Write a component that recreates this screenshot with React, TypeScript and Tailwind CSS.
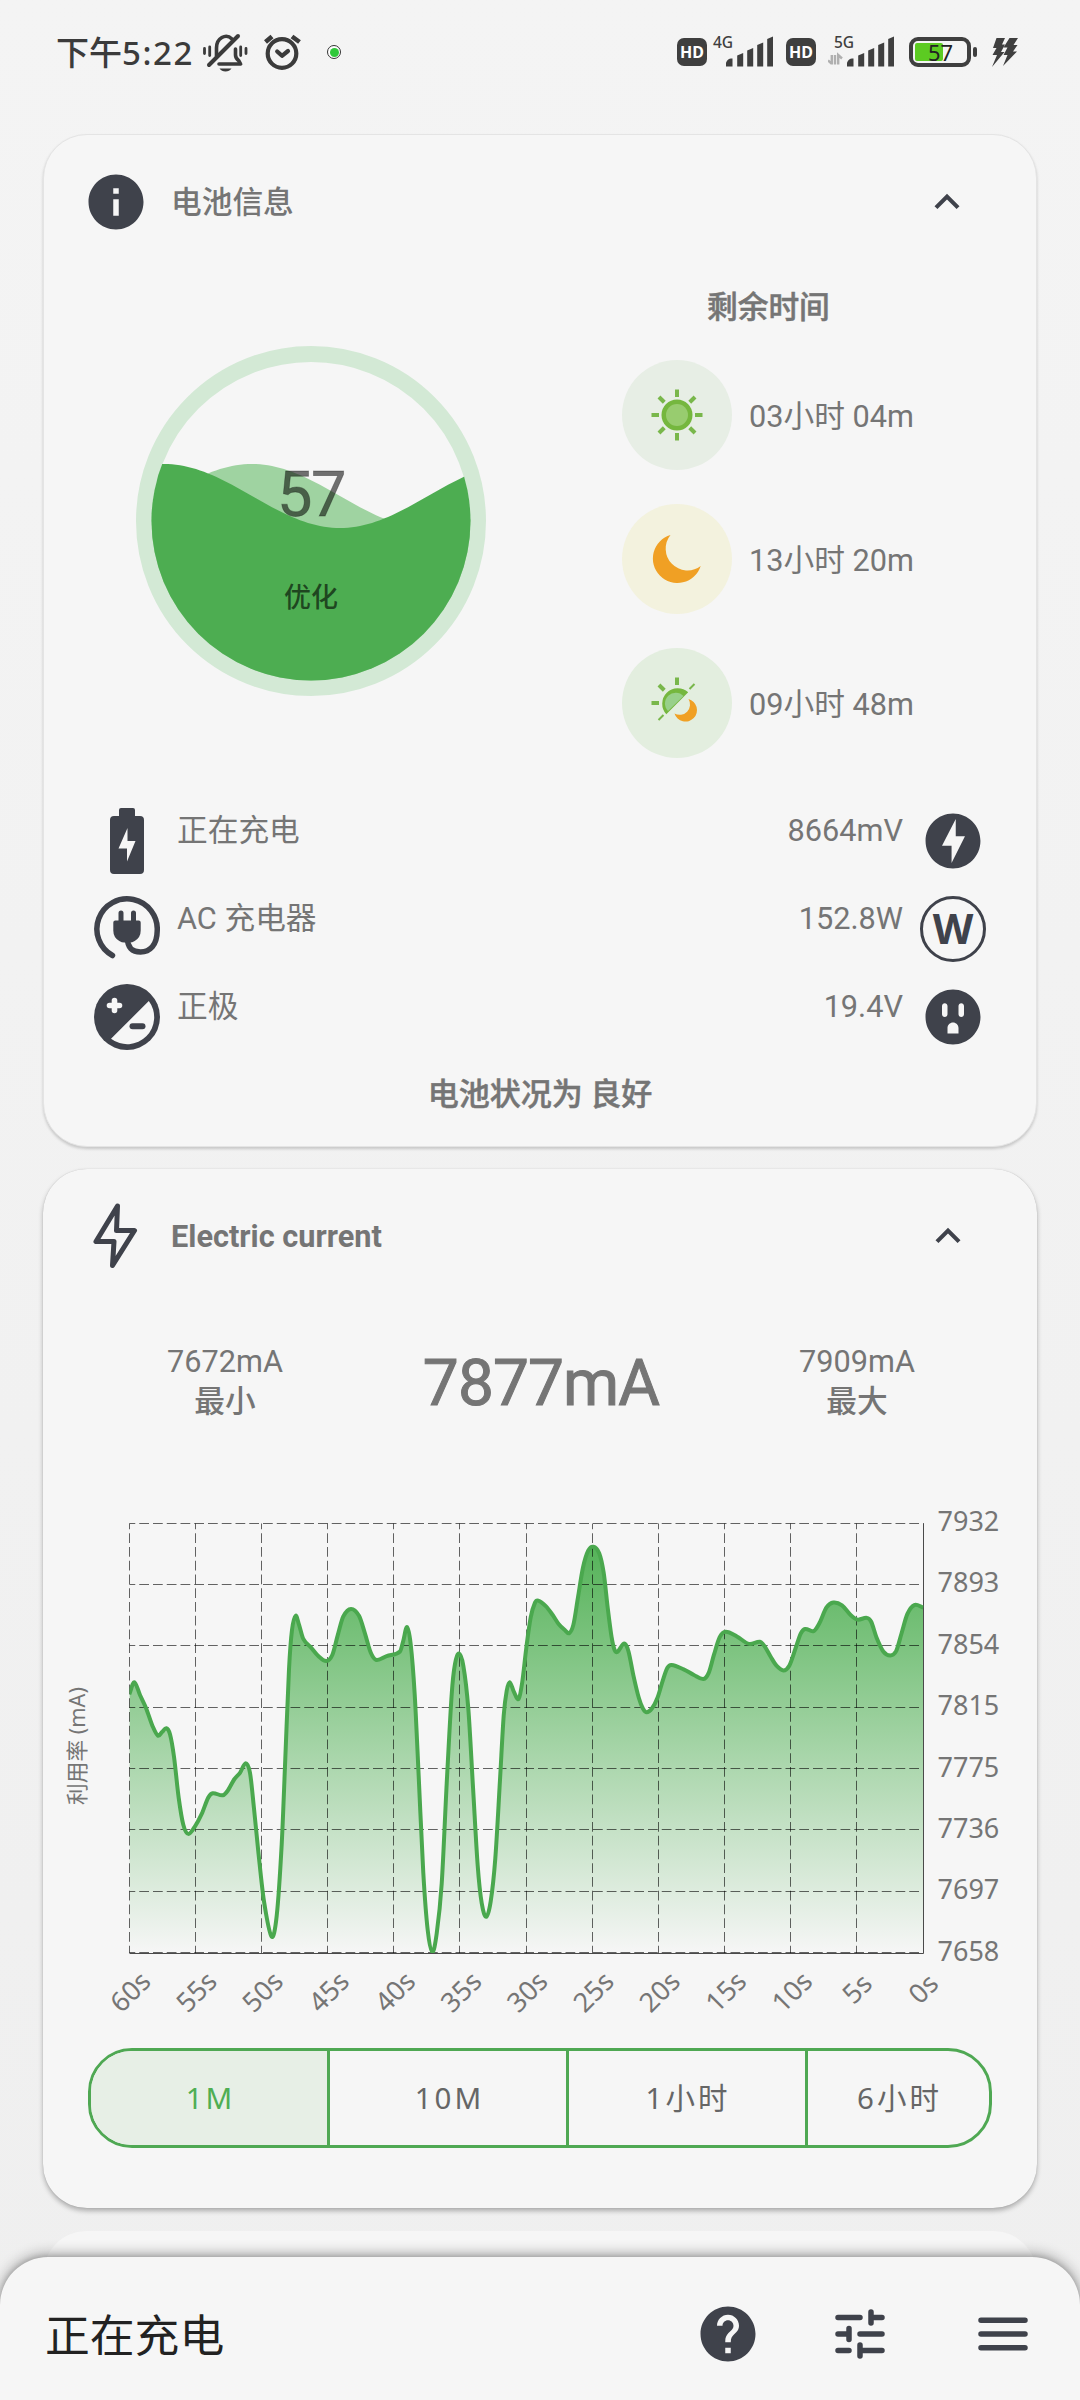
import React from "react";
import {
  MdHelp,
  MdInfo,
  MdKeyboardArrowUp,
  MdOfflineBolt,
  MdOutlet,
} from "react-icons/md";

const INK = "#3f424b";

/* ---------- status bar ---------- */

function BellOff() {
  return (
    <svg className="ml-[8px] block" width="46" height="40" viewBox="202 32 46 40" fill="none" stroke="#3b3b3b" strokeWidth="3.6" strokeLinecap="round">
      <path d="M216.5 56V48a9.5 11.5 0 0 1 15.5-9" />
      <path d="M209 65 L238 36" strokeWidth="4" />
      <path d="M235.5 49v6q0 3.500 3.500 6l1.600 3H219" strokeLinejoin="round" />
      <path d="M219.500 68.500h12q-2 3-6 3t-6-3z" fill="#3b3b3b" stroke="none" />
      <path d="M204.500 48.500v5M209.700 47v8.500M240.700 47v8.500M246 48.500v5" strokeWidth="2.800" />
    </svg>
  );
}

function Alarm() {
  return (
    <svg className="ml-[13px] block" width="42" height="40" viewBox="260 32 42 40" fill="none" stroke="#3b3b3b" strokeWidth="4.200" strokeLinecap="round" strokeLinejoin="round">
      <circle cx="281" cy="53.500" r="14.300" />
      <path d="M276.200 51.500L281 55.800L287 51" />
      <path d="M264.500 42L271 36.500M291 36.500L298.500 42" strokeLinecap="butt" strokeWidth="4.600" />
    </svg>
  );
}

function Hd({ className }: { className: string }) {
  return (
    <div className={className + " flex h-[28px] w-[30px] items-center justify-center rounded-[7px] bg-[#3f3f3f] font-['Noto_Sans'] text-[16px] font-bold leading-none text-white"}>
      HD
    </div>
  );
}

function Signal({ label, arrows }: { label: string; arrows?: boolean }) {
  return (
    <div className="relative">
      <span className="absolute left-[6px] top-[-2px] font-['Noto_Sans'] text-[15.5px] font-medium leading-[22px] text-[#3f3f3f]">{label}</span>
      <svg className="block" width="68" height="34" viewBox="0 0 68 34">
        {arrows && (
          <path d="M0 27.500L3.500 30.500M3.800 31.500V22M7 31.500V22M10.200 31.500V22L14 25.500" fill="none" stroke="#b0b0b0" strokeWidth="2.400" />
        )}
        <g fill="#3f3f3f">
          <path d="M19 33.500v-4q2-4 5-4h1.500v8z" />
          <path d="M30.200 33.500V22.500l6-2.500v13.500z" />
          <path d="M40.200 33.500V17.500l6-2.500v18.500z" />
          <path d="M50.200 33.500V12l6-2.500v24z" />
          <path d="M60.200 33.500V6l5.800-2.500v30z" />
        </g>
      </svg>
    </div>
  );
}

function StatusBar() {
  return (
    <header className="flex h-[134px] items-start pl-[56px] pt-[32px]">
      <div className="mt-[-1px] w-[138px] whitespace-nowrap font-['Noto_Sans','Noto_Sans_CJK_SC',sans-serif] text-[33px] font-medium leading-[44px] text-[#3b3b3b]">
        下午<span className="tracking-[1.6px]">5:22</span>
      </div>
      <BellOff />
      <Alarm />
      <div className="ml-[24px] mt-[13px] flex h-[14px] w-[14px] items-center justify-center rounded-full border border-[#333] bg-white">
        <div className="h-[9px] w-[9px] rounded-full bg-[#2fc83a]" />
      </div>
      <Hd className="ml-[336px] mt-[6px]" />
      <div className="mt-[1px]">
        <Signal label="4G" />
      </div>
      <Hd className="ml-[11px] mt-[6px]" />
      <div className="ml-[12px] mt-[1px]">
        <Signal label="5G" arrows />
      </div>
      <div className="ml-[13px] mt-[5px] flex items-center gap-[2px]">
        <div className="relative h-[30px] w-[62px] rounded-[9px] border-[4.500px] border-[#3f3f3f] p-[2px]">
          <div className="h-full w-[28px] rounded-[2px] bg-[#5ccb22]" />
          <span className="absolute inset-0 flex items-center justify-center pl-[1px] font-['Noto_Sans'] text-[22px] leading-none text-[#222]">57</span>
        </div>
        <div className="h-[10px] w-[4px] rounded-[2px] bg-[#3f3f3f]" />
      </div>
      <svg className="ml-[14px] mt-[6px] block" width="28" height="30" viewBox="0 0 28 30" fill="#3f3f3f">
        <path d="M5.500 0h8.500l-3 6.500h3l-4 7.500h3.500L1 29l5-12H1.500l4-7H2z" />
        <path d="M18.500 0h8.500l-4.500 7h4l-4.500 6.500h4L12 28l4.500-11h-4l4-7.500h-4z" />
      </svg>
    </header>
  );
}

/* ---------- battery gauge ---------- */

function wavePath(crest: number) {
  let d = "M0 400";
  for (let x = 0; x <= 350; x += 4) {
    const y = 150 - 32 * Math.cos((2 * Math.PI * (x - crest)) / 352);
    d += ` L${x} ${y.toFixed(1)}`;
  }
  return d + " L352 400 Z";
}

function Gauge() {
  return (
    <div className="relative h-[350px] w-[350px]">
      <svg className="block" width="350" height="350" viewBox="0 0 350 350">
        <defs>
          <clipPath id="bowl">
            <circle cx="175" cy="175" r="159.500" />
          </clipPath>
        </defs>
        <circle cx="175" cy="175" r="167" fill="none" stroke="#d3e9d5" strokeWidth="16" />
        <g clipPath="url(#bowl)">
          <path d={wavePath(116)} fill="#9fd3a1" />
          <path d={wavePath(28)} fill="#4dad51" />
        </g>
      </svg>
      <div className="absolute inset-x-0 top-[112px] text-center font-['Roboto'] text-[63px] leading-[74px] tracking-[-1.5px] text-black/55 [-webkit-text-stroke:0.8px_rgba(0,0,0,0.3)]">57</div>
      <div className="absolute inset-x-0 top-[234px] text-center text-[27px] font-medium leading-[36px] text-black/60">优化</div>
    </div>
  );
}

/* ---------- remaining time ---------- */

function Rays({ angles }: { angles: number[] }) {
  return (
    <g stroke="#79b74b" strokeWidth="4">
      {angles.map((a) => (
        <path key={a} d="M0 -18V-25.500" transform={`rotate(${a})`} />
      ))}
    </g>
  );
}

function Sun() {
  return (
    <svg width="110" height="110" viewBox="-55 -55 110 110">
      <Rays angles={[0, 45, 90, 135, 180, 225, 270, 315]} />
      <circle r="15.500" fill="#75b73e" />
      <circle r="11" fill="#98cc6f" />
    </svg>
  );
}

function Moon() {
  return (
    <svg width="110" height="110" viewBox="-55 -55 110 110">
      <path d="M-6.500 -24A24.500 24.500 0 1 0 23.700 7A21.800 21.800 0 0 1 -6.500 -24Z" fill="#f0a024" />
    </svg>
  );
}

function SunMoon() {
  return (
    <svg width="110" height="110" viewBox="-55 -55 110 110">
      <Rays angles={[0, 270, 315]} />
      <path d="M12.500 -14L17.500 -19M-13.500 12L-18.500 17" stroke="#79b74b" strokeWidth="2" />
      <path d="M11.200 -10.700A15.500 15.500 0 0 0 -10.700 11.200Z" fill="#75b73e" />
      <path d="M6.500 -7A10 10 0 0 0 -9 8Z" fill="#98d08a" />
      <path d="M11.500 -4A11.500 11.500 0 1 1 -2.500 10.500A10.400 10.400 0 0 0 11.500 -4Z" fill="#f0a024" />
    </svg>
  );
}

function TimeRow({ bg, icon, text }: { bg: string; icon: React.ReactNode; text: string }) {
  return (
    <div className="flex items-center gap-[17px]">
      <div className={"h-[110px] w-[110px] rounded-full " + bg}>{icon}</div>
      <span className="pt-[4px] text-[30.700px] leading-[44px]">{text}</span>
    </div>
  );
}

/* ---------- detail icons ---------- */

function BatteryIcon() {
  return (
    <svg className="block" width="66" height="66" viewBox="0 0 66 66">
      <path fill={INK} d="M25 2q0-2 2-2h12q2 0 2 2v6h5q4 0 4 4v50q0 4-4 4H20q-4 0-4-4V12q0-4 4-4h5z" />
      <path fill="#f6f6f6" d="M33.500 20L24.500 40.500h8.500v13L41.500 33h-8z" />
    </svg>
  );
}

function PlugIcon() {
  return (
    <svg className="block" width="66" height="66" viewBox="0 0 66 66">
      <g fill="none" stroke={INK} strokeWidth="5.500" strokeLinecap="round">
        <path d="M18.500 59.500A30.200 30.200 0 1 1 63.200 35C63 49 56 56 46.500 56C38 56 33.500 51 33.500 43" />
        <path d="M27 17v10M39.500 17v10" strokeWidth="5" />
      </g>
      <path fill={INK} d="M19.300 26.500q0-2 2-2h23.400q2 0 2 2v8q0 7-6 10.500q-2.500 1.500-5 1.500h-5.400q-2.500 0-5-1.500q-6-3.500-6-10.500z" />
    </svg>
  );
}

function PolarityIcon() {
  return (
    <svg className="block" width="66" height="66" viewBox="0 0 66 66">
      <circle cx="33" cy="33" r="33" fill={INK} />
      <path d="M54.800 17L17 54.800A27 27 0 0 0 54.800 17Z" fill="#f6f6f6" />
      <path d="M20.500 16.500v10M15.500 21.500h10" stroke="#f6f6f6" strokeWidth="5.600" strokeLinecap="round" />
      <path d="M38.500 42.300h10" stroke={INK} strokeWidth="6" strokeLinecap="round" />
    </svg>
  );
}

function WattIcon() {
  return (
    <div className="flex h-[66px] w-[66px] items-center justify-center rounded-full border-[3.500px] border-[#3f424b] pb-[2px] font-['Noto_Sans'] text-[42px] font-bold leading-none text-[#3f424b]">
      W
    </div>
  );
}

function DetailRow({ left, label, value, right }: { left: React.ReactNode; label: string; value: string; right: React.ReactNode }) {
  return (
    <div className="flex h-[88px] items-start text-[30.700px] leading-[44px]">
      <div className="w-[66px] pt-[10px]">{left}</div>
      <span className="ml-[17px] grow pt-[11px]">{label}</span>
      <span className="mr-[17px] pt-[11px]">{value}</span>
      <div className="w-[66px] pt-[10px]">{right}</div>
    </div>
  );
}

function CardHeader({ icon, title, titleClass }: { icon: React.ReactNode; title: string; titleClass: string }) {
  return (
    <div className="flex h-[134px] items-center pl-[39px] pr-[64px]">
      <div className="flex w-[66px] justify-center">{icon}</div>
      <h2 className={"grow pt-[2px] leading-[44px] " + titleClass}>{title}</h2>
      <MdKeyboardArrowUp size={50} color={INK} />
    </div>
  );
}

function BatteryCard() {
  return (
    <section className="mx-[43px] h-[1013px] rounded-[44px] border border-[#e4e4e4] bg-[#f6f6f6] shadow-[0_2px_3px_rgba(0,0,0,0.18)]">
      <CardHeader icon={<MdInfo size={66} color={INK} />} title="电池信息" titleClass="ml-[22px] text-[30.700px] font-medium" />
      <div className="flex h-[529px]">
        <div className="pl-[92px] pt-[77px]">
          <Gauge />
        </div>
        <div className="pl-[136px] pt-[17px]">
          <h3 className="ml-[85px] text-[30.700px] font-medium leading-[44px] [-webkit-text-stroke:0.5px_#757575]">剩余时间</h3>
          <div className="mt-[30px] flex flex-col gap-[34px]">
            <TimeRow bg="bg-[#e7eee5]" icon={<Sun />} text="03小时 04m" />
            <TimeRow bg="bg-[#f3f2de]" icon={<Moon />} text="13小时 20m" />
            <TimeRow bg="bg-[#e3eedf]" icon={<SunMoon />} text="09小时 48m" />
          </div>
        </div>
      </div>
      <div className="px-[50px]">
        <DetailRow left={<BatteryIcon />} label="正在充电" value="8664mV" right={<MdOfflineBolt className="block" size={66} color={INK} />} />
        <DetailRow left={<PlugIcon />} label="AC 充电器" value="152.8W" right={<WattIcon />} />
        <DetailRow left={<PolarityIcon />} label="正极" value="19.4V" right={<MdOutlet className="block" size={66} color={INK} />} />
      </div>
      <p className="pt-[11px] text-center text-[31px] font-medium leading-[44px] [-webkit-text-stroke:0.5px_#757575]">电池状况为 良好</p>
    </section>
  );
}

/* ---------- current chart ---------- */

/* Curve samples: x in page pixels, y as a height on a 401-unit plot. */
const SAMPLES: [number, number][] = [
  [129.3, 1680], [134.3, 1668.7], [140, 1680.7], [146, 1692.7], [152.7, 1710], [158, 1718.7], [162, 1715.3], [166.3, 1711.7],
  [170, 1717.3], [174, 1738.3], [178.7, 1776.7], [183.3, 1801.7], [188.3, 1810.3], [195, 1803.3], [201.7, 1791.7], [208.3, 1776.3],
  [212.7, 1772.3], [222.7, 1774.3], [227.7, 1770], [234.3, 1759.3], [240, 1753.3], [245.7, 1744.3], [250, 1753.3], [254, 1786.7],
  [258.3, 1826.7], [264, 1873.3], [271.7, 1906.3], [276.7, 1886.7], [281.7, 1820], [285.3, 1740], [289, 1656.7], [292, 1620],
  [295.7, 1606.7], [299, 1615], [303.3, 1628.3], [310.7, 1636], [318.3, 1644.3], [326.3, 1649], [332.3, 1643.3], [337.7, 1625],
  [343.3, 1607.3], [351, 1600.3], [359, 1606.7], [365, 1623.3], [370.7, 1641], [376.3, 1648], [386.7, 1644.3], [400, 1640],
  [403.3, 1630], [407, 1617.3], [410.7, 1633.3], [414.7, 1680], [418.7, 1756.7], [423.3, 1846.7], [427.7, 1900], [432.3, 1920.5],
  [436.7, 1903.3], [441.7, 1856.7], [446.7, 1763.3], [451.7, 1680], [455, 1651.7], [459, 1642], [463.3, 1653.3], [468.3, 1693.3],
  [473, 1766.7], [477.7, 1840], [481.7, 1875], [486.3, 1887.7], [490.7, 1873.3], [495.3, 1833.3], [500, 1760], [503.7, 1700],
  [506.7, 1676.7], [509.7, 1668.7], [513.7, 1677.3], [518.7, 1684.3], [522.3, 1668.3], [526.3, 1636.7], [530.7, 1608.3], [535, 1594.5],
  [538.2, 1592.5], [545.8, 1597.7], [552.7, 1606], [558.6, 1614.3], [564.8, 1620], [569.2, 1623], [573.4, 1615], [577.9, 1590],
  [583, 1561.7], [588.2, 1546], [593.3, 1542.3], [599.2, 1548.3], [603.7, 1566.7], [607.8, 1600], [611.6, 1626.7], [614.7, 1639],
  [617.5, 1640.3], [624.3, 1632.7], [628.5, 1640], [633.6, 1663.3], [638.8, 1683.3], [642.9, 1693.3], [646.7, 1696.7], [651.9, 1693.3],
  [657.7, 1682.7], [662.9, 1666.7], [667.4, 1655.3], [671.5, 1652.7], [683.6, 1656.7], [693.9, 1662], [703.5, 1665.7], [708.7, 1660],
  [713.9, 1643.3], [719.7, 1626.7], [725.6, 1621.7], [736.9, 1626], [749, 1633], [760, 1631], [764.5, 1635], [770.7, 1645],
  [776.5, 1653.3], [783.4, 1657.7], [789.3, 1653.3], [795.5, 1637.3], [800.7, 1623.3], [805.1, 1619], [813.7, 1621], [819.6, 1613.3],
  [826.5, 1599], [833.4, 1594.3], [842, 1597], [850.6, 1606], [857.5, 1610.3], [866.8, 1608.7], [871.2, 1612.3], [876.4, 1626.7],
  [883.3, 1640], [890.2, 1643.7], [896, 1640], [901.5, 1623.3], [907.4, 1605], [914.3, 1596.7], [923.3, 1599],
];

/* Stretch sample heights onto the 430px tall plot. */
const POINTS = SAMPLES.map(([x, y]): [number, number] => [x, 1480 + (y - 1480) * 1.0714]);

/* Cubic Hermite interpolation with centred slopes. */
function smooth(p: [number, number][]) {
  const n = p.length;
  const m = p.map((_, i) => {
    const a = p[Math.max(0, i - 1)];
    const b = p[Math.min(n - 1, i + 1)];
    return (b[1] - a[1]) / (b[0] - a[0]);
  });
  let d = `M${p[0][0]} ${p[0][1]}`;
  for (let i = 0; i < n - 1; i++) {
    const h = (p[i + 1][0] - p[i][0]) / 3;
    d += ` C${p[i][0] + h} ${p[i][1] + m[i] * h} ${p[i + 1][0] - h} ${p[i + 1][1] - m[i + 1] * h} ${p[i + 1][0]} ${p[i + 1][1]}`;
  }
  return d;
}

const Y_LABELS = ["7932", "7893", "7854", "7815", "7775", "7736", "7697", "7658"];
const X_LABELS = ["60s", "55s", "50s", "45s", "40s", "35s", "30s", "25s", "20s", "15s", "10s", "5s", "0s"];

function Chart() {
  const left = 129.5;
  const right = 923.5;
  const top = 1523.5;
  const bottom = 1953;
  const line = smooth(POINTS);
  return (
    <svg className="block" width="994" height="530" viewBox="43 1502 994 530">
      <defs>
        <linearGradient id="area" gradientUnits="userSpaceOnUse" x1="0" x2="0" y1={top} y2={bottom}>
          <stop offset="0" stopColor="#4caf50" />
          <stop offset="1" stopColor="#4caf50" stopOpacity="0" />
        </linearGradient>
        <clipPath id="plot">
          <rect x={left} y={top} width={right - left} height={bottom - top} />
        </clipPath>
      </defs>
      <g clipPath="url(#plot)">
        <path d={`${line} L923.300 1953 L129.300 1953 Z`} fill="url(#area)" />
      </g>
      <g stroke="#000000" strokeOpacity="0.6" strokeWidth="1" strokeDasharray="9.750 4" strokeDashoffset="4">
        {Y_LABELS.map((_, i) => {
          const y = Math.round(top + (i * (bottom - top)) / 7) - 0.5;
          return <path key={i} d={`M${left} ${y}H${right}`} />;
        })}
        {X_LABELS.map((_, i) => {
          const x = Math.round(left + (i * (right - left)) / 12) - 0.5;
          return <path key={i} d={`M${x} ${top}V${bottom}`} />;
        })}
      </g>
      <path d={`M${left} 1953.500H${right}V${top}`} fill="none" stroke="#4a4a4a" strokeWidth="1" />
      <g clipPath="url(#plot)">
        <path d={line} fill="none" stroke="#4aa84e" strokeWidth="4" strokeLinejoin="round" />
      </g>
      <g fill="#757575" fontSize="27" className="font-['Noto_Sans']">
        {Y_LABELS.map((t, i) => (
          <text key={t} x="937.500" y={1531 + i * 61.4}>
            {t}
          </text>
        ))}
        {X_LABELS.map((t, i) => (
          <text key={t} textAnchor="middle" transform={`translate(${137 + i * 66.17 - (i > 10 ? 1 : 0)} ${i > 10 ? 1995.5 : 1998.5}) rotate(-45)`}>
            {t}
          </text>
        ))}
      </g>
      <text textAnchor="middle" transform="translate(85 1746) rotate(-90)" fill="#757575" fontSize="21.700" className="font-['Noto_Sans','Noto_Sans_CJK_SC',sans-serif]">
        利用率 (mA)
      </text>
    </svg>
  );
}

function Extreme({ value, label }: { value: string; label: string }) {
  return (
    <div className="w-[240px] pt-[5px] text-center text-[30.700px] leading-[40px]">
      <div>{value}</div>
      <div className="font-medium">{label}</div>
    </div>
  );
}

function RangeTabs() {
  return (
    <div className="ml-[45px] flex h-[100px] w-[904px] overflow-hidden rounded-[44px] border-[3px] border-[#4fa853] font-['Noto_Sans','Noto_Sans_CJK_SC',sans-serif] text-[29.500px] tracking-[3px] text-[#666]">
      <div className="flex w-[239px] items-center justify-center border-r-[3px] border-[#4fa853] bg-[#e7efe6] pl-[3px] text-[#4fae53]">1M</div>
      <div className="flex w-[239px] items-center justify-center border-r-[3px] border-[#4fa853] pl-[3px]">10M</div>
      <div className="flex w-[239px] items-center justify-center border-r-[3px] border-[#4fa853] pl-[2px]">1小时</div>
      <div className="flex grow items-center justify-center pl-[2px]">6小时</div>
    </div>
  );
}

function CurrentCard() {
  return (
    <section className="mx-[43px] mt-[22px] h-[1039px] rounded-[44px] bg-[#f6f6f6] shadow-[0_3px_5px_rgba(0,0,0,0.28),0_0_1px_rgba(0,0,0,0.2)]">
      <CardHeader
        icon={
          <svg width="66" height="70" viewBox="83 1200 66 70" fill="none" stroke={INK} strokeWidth="5" strokeLinejoin="round">
            <path d="M118.500 1205L97 1240.500H115L113.500 1264.500L135.500 1229.500H117.500Z" />
          </svg>
        }
        title="Electric current"
        titleClass="ml-[23px] text-[30.700px] font-bold"
      />
      <div className="flex h-[199px] items-start pl-[62px] pt-[34px]">
        <Extreme value="7672mA" label="最小" />
        <div className="w-[392px] pt-[9px] text-center font-['Roboto'] text-[64px] leading-[76px] tracking-[-0.9px] [-webkit-text-stroke:1px_#757575]">7877mA</div>
        <Extreme value="7909mA" label="最大" />
      </div>
      <Chart />
      <div className="pt-[16px]">
        <RangeTabs />
      </div>
    </section>
  );
}

function BottomBar() {
  return (
    <nav className="absolute inset-x-0 bottom-0 flex h-[143px] items-center rounded-t-[48px] bg-[#f6f6f6] pl-[45px] pt-[11px] shadow-[0_-3px_14px_rgba(0,0,0,0.32),0_0_6px_rgba(0,0,0,0.2)]">
      <span className="grow pt-[5px] text-[44.800px] leading-[60px] text-[#222]">正在充电</span>
      <MdHelp size={66} color={INK} />
      <svg className="ml-[66px]" width="66" height="66" viewBox="0 0 24 24" fill="none" stroke={INK} strokeWidth="2" strokeLinecap="round" strokeLinejoin="round">
        <path d="M4 6h8M16 4v4M16 6h4M4 12h4M8 10v4M12 12h8M4 18h4M12 16v4M12 18h8" />
      </svg>
      <svg className="ml-[77px] mr-[44px]" width="66" height="66" viewBox="0 0 24 24" fill="none" stroke={INK} strokeWidth="2" strokeLinecap="round">
        <path d="M4 7h16M4 12h16M4 17h16" />
      </svg>
    </nav>
  );
}

export default function App() {
  return (
    <div className="relative h-[2400px] w-[1080px] overflow-hidden bg-linear-to-b from-[#f4f4f4] to-[#efefef] font-['Roboto','Noto_Sans_CJK_SC',sans-serif] text-[#757575]">
      <StatusBar />
      <BatteryCard />
      <CurrentCard />
      <section className="mx-[43px] mt-[23px] h-[200px] rounded-t-[44px] bg-[#f6f6f6]" />
      <BottomBar />
    </div>
  );
}
